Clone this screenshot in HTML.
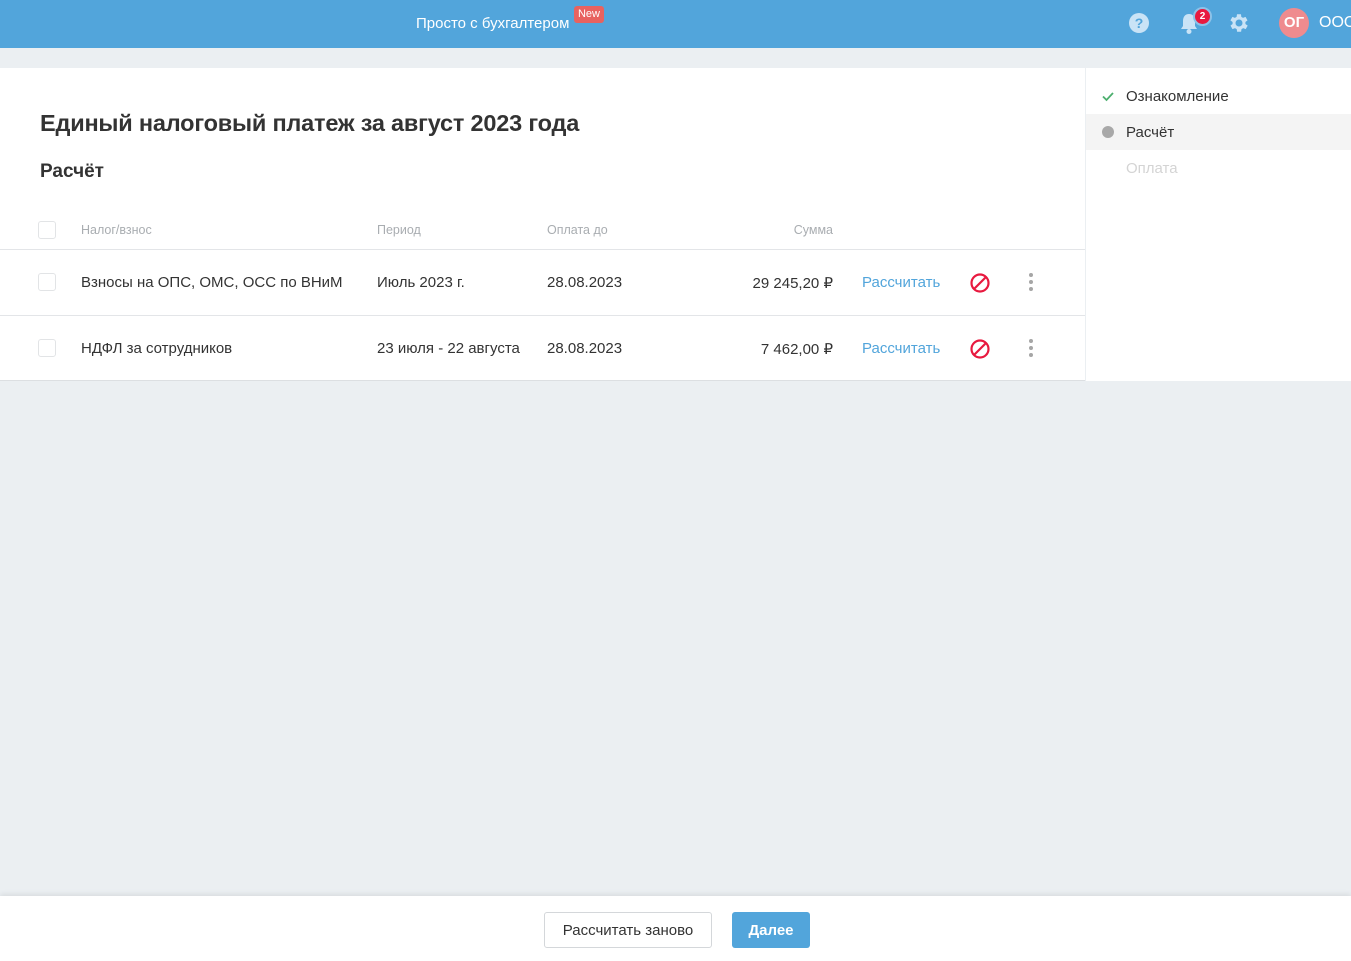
<!DOCTYPE html>
<html><head><meta charset="utf-8"><style>
*{box-sizing:border-box;margin:0;padding:0}
body{width:1351px;height:961px;background:#ebeff2;font-family:"Liberation Sans",sans-serif;position:relative;overflow:hidden;color:#333}
.hdr{position:absolute;left:0;top:0;width:1351px;height:48px;background:#52a5db}
.abs{position:absolute;white-space:nowrap}
.main{position:absolute;left:0;top:68px;width:1085px;height:313px;background:#fff;border-bottom:1px solid #dcdfe2}
.side{position:absolute;left:1086px;top:68px;width:265px;height:313px;background:#fff}
.line{position:absolute;left:0;width:1085px;height:1px;background:#e3e5e8}
.cb{position:absolute;left:38px;width:18px;height:18px;border:1px solid #e2e4e6;border-radius:3px}
.th{font-size:12.5px;color:#a9adb1}
.td{font-size:15px;color:#333}
.lnk{font-size:15px;color:#52a5db}
.dots{position:absolute;width:4px}
.dots i{display:block;width:4px;height:4px;border-radius:2px;background:#a6a6a6;margin-bottom:3px}
.foot{position:absolute;left:0;top:896px;width:1351px;height:65px;background:#fff;box-shadow:0 -2px 5px rgba(0,0,0,.08)}
</style></head><body>
<div class="hdr"></div>
<div class="abs" style="left:416px;top:15px;font-size:15px;color:#fff">Просто с бухгалтером</div>
<div class="abs" style="left:574px;top:6px;width:30px;height:17px;background:#e8625f;border-radius:3px;color:#fff;font-size:11px;text-align:center;line-height:17px">New</div>
<svg class="abs" style="left:1128px;top:12px" width="22" height="22" viewBox="0 0 22 22"><circle cx="11" cy="11" r="10" fill="#c9e3f6"/><text x="11" y="16" text-anchor="middle" font-family="Liberation Sans" font-weight="bold" font-size="14" fill="#52a5db">?</text></svg>
<svg class="abs" style="left:1179px;top:13px" width="20" height="22" viewBox="0 0 20 22"><path d="M10 1c-4 0-6 3-6 7v5l-2 3h16l-2-3V8c0-4-2-7-6-7z" fill="#c9e3f6"/><circle cx="10" cy="18.5" r="2.5" fill="#c9e3f6"/></svg>
<div class="abs" style="left:1193px;top:7px;width:19px;height:19px;border-radius:50%;background:#e8193f;border:2px solid #8dc2e8;color:#fff;font-size:10px;font-weight:bold;text-align:center;line-height:15px">2</div>
<svg class="abs" style="left:1227px;top:11px" width="24" height="24" viewBox="0 0 24 24"><path fill="#c9e3f6" d="M19.4 13a7.5 7.5 0 0 0 0-2l2.1-1.6-2-3.5-2.5 1a7 7 0 0 0-1.7-1L15 3.2h-4l-.4 2.7a7 7 0 0 0-1.7 1l-2.5-1-2 3.5L6.6 11a7.5 7.5 0 0 0 0 2l-2.1 1.6 2 3.5 2.5-1a7 7 0 0 0 1.7 1l.4 2.7h4l.4-2.7a7 7 0 0 0 1.7-1l2.5 1 2-3.5zM13 15.5a3.5 3.5 0 1 1 0-7 3.5 3.5 0 0 1 0 7z" transform="translate(-1 0)"/></svg>
<div class="abs" style="left:1279px;top:8px;width:30px;height:30px;border-radius:50%;background:#ef8b8e;color:#fff;font-size:15px;font-weight:bold;text-align:center;line-height:30px">ОГ</div>
<div class="abs" style="left:1319px;top:14px;font-size:16px;color:#fff">ООО</div>

<div class="main">
<div class="abs" style="left:40px;top:42px;font-size:23.5px;font-weight:bold;color:#333;letter-spacing:-0.2px">Единый налоговый платеж за август 2023 года</div>
<div class="abs" style="left:40px;top:93px;font-size:19px;font-weight:bold;color:#333">Расчёт</div>
<div class="cb" style="top:153px"></div>
<div class="abs th" style="left:81px;top:155px">Налог/взнос</div>
<div class="abs th" style="left:377px;top:155px">Период</div>
<div class="abs th" style="left:547px;top:155px">Оплата до</div>
<div class="abs th" style="left:733px;top:155px;width:100px;text-align:right">Сумма</div>
<div class="line" style="top:181px"></div>

<div class="cb" style="top:205px"></div>
<div class="abs td" style="left:81px;top:206px">Взносы на ОПС, ОМС, ОСС по ВНиМ</div>
<div class="abs td" style="left:377px;top:206px">Июль 2023 г.</div>
<div class="abs td" style="left:547px;top:206px">28.08.2023</div>
<div class="abs td" style="left:693px;top:206px;width:140px;text-align:right">29 245,20 ₽</div>
<div class="abs lnk" style="left:862px;top:206px">Рассчитать</div>
<svg class="abs" style="left:969px;top:204px" width="22" height="22" viewBox="0 0 22 22"><circle cx="11" cy="11" r="8.5" fill="none" stroke="#e8193f" stroke-width="2.2"/><path d="M5 17L17 5" stroke="#e8193f" stroke-width="2.2"/></svg>
<div class="dots" style="left:1029px;top:205px"><i></i><i></i><i></i></div>
<div class="line" style="top:247px"></div>

<div class="cb" style="top:271px"></div>
<div class="abs td" style="left:81px;top:272px">НДФЛ за сотрудников</div>
<div class="abs td" style="left:377px;top:272px">23 июля - 22 августа</div>
<div class="abs td" style="left:547px;top:272px">28.08.2023</div>
<div class="abs td" style="left:693px;top:272px;width:140px;text-align:right">7 462,00 ₽</div>
<div class="abs lnk" style="left:862px;top:272px">Рассчитать</div>
<svg class="abs" style="left:969px;top:270px" width="22" height="22" viewBox="0 0 22 22"><circle cx="11" cy="11" r="8.5" fill="none" stroke="#e8193f" stroke-width="2.2"/><path d="M5 17L17 5" stroke="#e8193f" stroke-width="2.2"/></svg>
<div class="dots" style="left:1029px;top:271px"><i></i><i></i><i></i></div>
</div>

<div class="side">
<svg class="abs" style="left:15px;top:22px" width="14" height="12" viewBox="0 0 14 12"><path d="M2 6.5l3.5 3.5L12 3" fill="none" stroke="#4caf6e" stroke-width="1.8"/></svg>
<div class="abs" style="left:40px;top:20px;font-size:15px;color:#333">Ознакомление</div>
<div class="abs" style="left:0;top:46px;width:265px;height:36px;background:#f4f4f4"></div>
<div class="abs" style="left:16px;top:58px;width:12px;height:12px;border-radius:50%;background:#a8a8a8"></div>
<div class="abs" style="left:40px;top:56px;font-size:15px;color:#333">Расчёт</div>
<div class="abs" style="left:40px;top:92px;font-size:15px;color:#d4d4d4">Оплата</div>
</div>

<div class="foot">
<div class="abs" style="left:544px;top:16px;width:168px;height:36px;border:1px solid #d4d7da;border-radius:3px;background:#fff;font-size:15px;color:#333;text-align:center;line-height:35px">Рассчитать заново</div>
<div class="abs" style="left:732px;top:16px;width:78px;height:36px;border-radius:3px;background:#52a5db;font-size:15px;font-weight:bold;color:#fff;text-align:center;line-height:37px">Далее</div>
</div>
</body></html>
